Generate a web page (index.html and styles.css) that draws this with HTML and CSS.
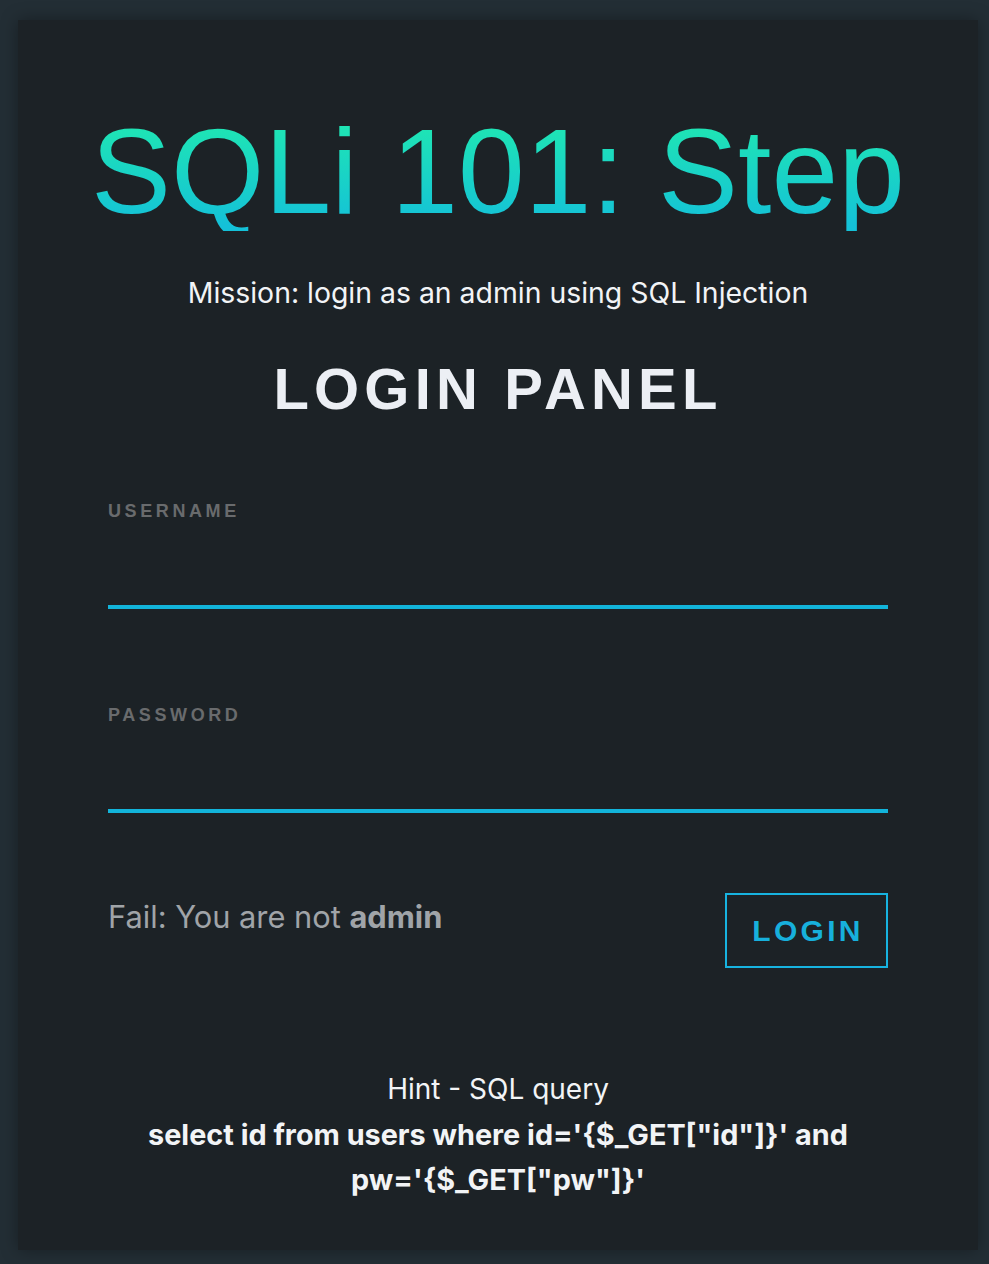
FILE: index.html
```html
<!DOCTYPE html>
<html lang="en">
<head>
<meta charset="utf-8">
<title>SQLi 101: Step</title>
<link rel="stylesheet" href="styles.css">
</head>
<body>
  <main class="card">
    <h1 class="title">SQLi 101: Step</h1>
    <p class="mission">Mission: login as an admin using SQL Injection</p>
    <h2 class="panel-title">LOGIN PANEL</h2>
    <form class="form">
      <div class="field">
        <label class="label" for="id">USERNAME</label>
        <input class="input" id="id" type="text">
      </div>
      <div class="field">
        <label class="label" for="pw">PASSWORD</label>
        <input class="input" id="pw" type="password">
      </div>
      <div class="actions">
        <p class="fail">Fail: You are not <b>admin</b></p>
        <button class="btn" type="button">LOGIN</button>
      </div>
    </form>
    <div class="hint">
      <p class="hint-title">Hint - SQL query</p>
      <p class="hint-query">select id from users where id='{$_GET["id"]}' and pw='{$_GET["pw"]}'</p>
    </div>
  </main>
</body>
</html>
```
FILE: styles.css
```css
html, body {
  margin: 0;
  padding: 0;
}
body {
  background: #232e35;
  padding: 20px 11px 14px 18px;
  font-family: Inter, Roboto, "Liberation Sans", sans-serif;
}
.card {
  box-sizing: border-box;
  width: 960px;
  height: 1230px;
  background: #1c2226;
  box-shadow: 0 0 16px rgba(0, 0, 0, 0.35);
  padding: 91px 90px 0;
  text-align: center;
}
.title {
  margin: 0 -90px;
  white-space: nowrap;
  font-family: "Liberation Sans", Arial, sans-serif;
  font-weight: 400;
  font-size: 120px;
  line-height: 120px;
  background: linear-gradient(to bottom, #1fe6b3 10%, #14c1d8 95%);
  -webkit-background-clip: text;
  background-clip: text;
  color: transparent;
}
.mission {
  margin: 45px 0 0;
  font-size: 28.4px;
  line-height: 33px;
  color: #f2f4f6;
}
.panel-title {
  margin: 51px 0 0;
  font-family: "Liberation Sans", Arial, sans-serif;
  font-weight: 700;
  font-size: 58px;
  line-height: 58px;
  letter-spacing: 5.2px;
  color: #eceff4;
}
.form {
  margin-top: 84px;
  text-align: left;
}
.field {
  display: flex;
  flex-direction: column;
}
.field + .field {
  margin-top: 97px;
}
.label {
  font-family: "Liberation Sans", Arial, sans-serif;
  font-weight: 700;
  font-size: 18px;
  line-height: 18px;
  letter-spacing: 3.6px;
  color: #696b6d;
}
.input {
  box-sizing: border-box;
  height: 89px;
  margin: 0;
  padding: 0;
  border: 0;
  border-bottom: 4px solid #12b4da;
  background: transparent;
  outline: none;
  color: #f2f4f6;
  font-size: 24px;
}
.actions {
  display: flex;
  justify-content: space-between;
  align-items: flex-start;
  margin-top: 80px;
}
.fail {
  margin: 9px 0 0;
  font-size: 30.8px;
  line-height: 30px;
  color: #a0a4a8;
}
.fail b {
  font-weight: 700;
}
.btn {
  box-sizing: border-box;
  width: 163px;
  height: 75px;
  padding: 0 0 0 3px;
  border: 2px solid #17b3e0;
  background: transparent;
  color: #17b0dc;
  font-family: "Liberation Sans", Arial, sans-serif;
  font-weight: 700;
  font-size: 30px;
  letter-spacing: 3.3px;
  cursor: pointer;
}
.hint {
  margin-top: 99px;
  color: #f2f4f6;
  font-size: 28px;
  line-height: 45px;
}
.hint p {
  margin: 0;
}
.hint-query {
  font-weight: 700;
  font-size: 28.8px;
}
```
